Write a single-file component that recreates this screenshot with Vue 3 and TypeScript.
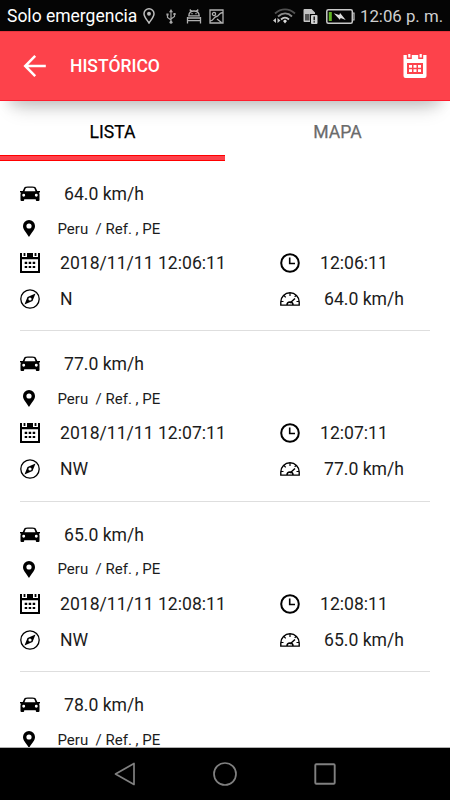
<script setup lang="ts">
interface Entry {
  speed: string
  place: string
  date: string
  time: string
  heading: string
}

const place = 'Peru  / Ref. , PE'
const entries: Entry[] = [
  { speed: '64.0 km/h', place, date: '2018/11/11 12:06:11', time: '12:06:11', heading: 'N' },
  { speed: '77.0 km/h', place, date: '2018/11/11 12:07:11', time: '12:07:11', heading: 'NW' },
  { speed: '65.0 km/h', place, date: '2018/11/11 12:08:11', time: '12:08:11', heading: 'NW' },
  { speed: '78.0 km/h', place, date: '2018/11/11 12:09:11', time: '12:09:11', heading: 'NW' },
]
</script>

<template>
  <div class="screen">
    <div class="status">
      <span class="carrier">Solo emergencia</span>
      <svg class="s-pin" width="12" height="16" viewBox="0 0 12 16" fill="none" stroke="#bdbdbd" stroke-width="1.5">
        <path d="M6 15C4 11.800 1 9 1 5.800a5 5 0 0 1 10 0C11 9 8 11.800 6 15z" /><circle cx="6" cy="5.700" r="1.200" fill="#bdbdbd" />
      </svg>
      <svg class="s-usb" width="10" height="15" viewBox="0 0 10 15" fill="none" stroke="#a8a8a8" stroke-width="1.200">
        <path d="M5 2v11M1.500 6v2.500L5 11M8.500 5v2.500L5 10" /><path d="M5 0 3 3.200h4zM.4 4.500h2.200v2H.4zM7.400 4h2.200v2H7.400z" fill="#a8a8a8" stroke="none" /><circle cx="5" cy="13.300" r="1.500" fill="#a8a8a8" stroke="none" />
      </svg>
      <svg class="s-bot" width="16" height="15" viewBox="0 0 16 15" fill="none" stroke="#b0b0b0" stroke-width="1.300">
        <path d="m3.800.5 1.500 2M12.200.5l-1.500 2M2.800 6.800C3 3.700 5 2 8 2s5 1.700 5.200 4.800zM1.500 8v6.500M14.500 8v6.500M1 9h14M1 11.600h14" /><path d="M5.400 4.600h1.200M9.400 4.600h1.200" />
      </svg>
      <svg class="s-img" width="15" height="15" viewBox="0 0 15 15" fill="none" stroke="#b0b0b0" stroke-width="1.300">
        <path d="M1 1h13v13H1zM1.500 12C5 11 4.500 8 7.500 7.500S9 4.500 13.500 3.500M8 10l4.500 3.500" /><circle cx="5" cy="5" r="1.600" />
      </svg>
      <svg class="s-wifi" width="23" height="16" viewBox="0 0 23 16" fill="none">
        <path d="M2 5.500c6-5.500 14-5.500 20 0" stroke="#505050" stroke-width="1.800" /><path d="M5 8.500c4.500-4 10-4 14 0" stroke="#8a8a8a" stroke-width="1.800" /><path d="M8 11.500c2.500-2.400 5.500-2.400 8 0" stroke="#c8c8c8" stroke-width="1.800" /><path d="m10 13 2-1.500 2 1.500-2 2.500z" fill="#ddd" /><path d="m0 12.500 3-2.500v5zM7.500 12.500l-3-2.500v5z" fill="#c8c8c8" />
      </svg>
      <svg class="s-sim" width="15" height="16" viewBox="0 0 15 16">
        <path d="M1.500 1h7L12 4.500V6H7v8H1.500Q.5 14 .5 13V2q0-1 1-1z" fill="#c4c4c4" /><path d="M2 6h4.500v6.500H2z" fill="#555" /><rect x="8" y="7" width="6.500" height="9" rx="1" fill="#d0d0d0" /><path d="M11.200 8.500v3.800M11.200 13.200v1.300" stroke="#111" stroke-width="1.400" />
      </svg>
      <svg class="s-bat" width="29" height="15" viewBox="0 0 29 15">
        <rect x=".8" y=".8" width="25.500" height="13.400" rx="1.500" fill="none" stroke="#c9c9c9" stroke-width="1.500" /><path d="M27 4h1v7h-1" fill="none" stroke="#c9c9c9" stroke-width="1.200" /><path d="M2.800 3h3v9h-3z" fill="#61b522" /><path d="m7.800 4.200 5.400 1.900.9-2 5.600 6.900-5-2-.9 1.800z" fill="#dedede" />
      </svg>
      <span class="clock">12:06 p. m.</span>
    </div>

    <header class="bar">
      <svg class="back" width="24" height="24" viewBox="0 0 24 24" fill="none" stroke="#fff" stroke-width="2.500">
        <path d="M22.800 12H2.500M12.200 1.800 2.200 12l10 10.200" />
      </svg>
      <h1>HISTÓRICO</h1>
      <svg class="bar-cal" width="24" height="24" viewBox="0 0 24 24">
        <path fill="#fff" fill-rule="evenodd" d="M.5 1H3.800v4h5V1h6.400v4h5V1h3.300v21q0 2-2 2h-19q-2 0-2-2zM4 9v11h16V9zM5.200 0h2.200v3.500H5.200zM16.600 0h2.200v3.500h-2.200zM6 11h3v2.700H6zM10.500 11h3v2.700h-3zM15 11h3v2.700h-3zM6 15.300h3V18H6zM10.500 15.300h3V18h-3zM15 15.300h3V18h-3z" />
      </svg>
    </header>

    <nav class="tabs">
      <div class="tab active">LISTA</div>
      <div class="tab">MAPA</div>
    </nav>

    <main class="list">
      <section v-for="e in entries" :key="e.time" class="entry">
        <div class="row">
          <svg class="icon" width="20" height="16" viewBox="0 0 20 16">
            <path fill="#000" fill-rule="evenodd" d="M0 5h2.700l1.500-3.300C4.600.7 6.500.5 10 .5s5.400.2 5.800 1.200L17.300 5H20v1.500h-1.200q.7.800.7 2V14q0 1-1 1h-1.700q-1 0-1-1v-.8H4.200v.8q0 1-1 1H1.500q-1 0-1-1V8.500q0-1.200.7-2H0zM4.500 5.200h11l-1.200-2.900C14 1.900 12.500 1.800 10 1.800s-4 .1-4.300.5zM3.700 7.800a1.400 1.400 0 1 0 0 2.900 1.400 1.400 0 0 0 0-2.900zM16.300 7.800a1.400 1.400 0 1 0 0 2.900 1.400 1.400 0 0 0 0-2.900z" />
          </svg>
          <span class="value speed">{{ e.speed }}</span>
        </div>
        <div class="row place-row">
          <svg class="icon pin" width="12" height="17" viewBox="0 0 12 17">
            <path fill="#000" fill-rule="evenodd" d="M6 0a6 6 0 0 1 6 6c0 3.800-3.500 6.500-6 11C3.500 12.500 0 9.800 0 6a6 6 0 0 1 6-6zm0 3.400a2.600 2.600 0 1 0 0 5.200 2.600 2.600 0 0 0 0-5.200z" />
          </svg>
          <span class="place">{{ e.place }}</span>
        </div>
        <div class="row split">
          <div class="cell">
            <svg class="icon cal" width="20" height="20" viewBox="0 0 20 20">
              <path fill="#000" fill-rule="evenodd" d="M0 0h2v4h5V0h6v4h5V0h2v19.500q0 .5-.5.500H.5Q0 20 0 19.500zM2 6.300V18h16V6.300zM3.600 0h1.800v3H3.600zM14.600 0h1.800v3h-1.800zM4.700 8.800h2.500V11H4.700zM8.700 8.800h2.500V11H8.700zM12.700 8.800h2.500V11h-2.500zM4.700 12.900h2.500v2.200H4.700zM8.700 12.900h2.500v2.200H8.700zM12.700 12.900h2.500v2.200h-2.500z" />
            </svg>
            <span class="value date">{{ e.date }}</span>
          </div>
          <div class="cell">
            <svg class="icon" width="20" height="20" viewBox="0 0 20 20" fill="none" stroke="#000" stroke-width="2">
              <circle cx="10" cy="10" r="8.800" /><path d="M9.700 4.500v6H15" stroke-width="1.600" />
            </svg>
            <span class="value date">{{ e.time }}</span>
          </div>
        </div>
        <div class="row split">
          <div class="cell">
            <svg class="icon" width="20" height="20" viewBox="0 0 20 20">
              <circle cx="10" cy="10" r="9.200" fill="none" stroke="#000" stroke-width="1.300" />
              <path fill="#000" fill-rule="evenodd" d="M15.500 4.500 12.500 12l-8 3.500L7.500 8zM10 8.400a1.600 1.600 0 1 0 0 3.200 1.600 1.600 0 0 0 0-3.200z" />
            </svg>
            <span class="value date">{{ e.heading }}</span>
          </div>
          <div class="cell">
            <svg class="icon gauge" width="20" height="14" viewBox="0 0 20 14" fill="none" stroke="#000" stroke-width="1.400">
              <path d="M.8 13.100V10A9.200 9.200 0 0 1 19.200 10v3.100z" /><path d="M10 1v3M4 3.500l1.700 1.800M16 3.500l-1.300 1.400M1 9.500h2.500M19 9.500h-2.500" stroke-width="1.200" /><path d="M7 13a3 3 0 0 1 6 0M10 11l5-4.500" stroke-width="1.500" />
            </svg>
            <span class="value speed">{{ e.speed }}</span>
          </div>
        </div>
      </section>
    </main>

    <footer class="nav">
      <svg width="24" height="24" viewBox="0 0 24 24" fill="none" stroke="#808080" stroke-width="1.700" stroke-linejoin="round">
        <path d="M2.500 12 21 1.500v21z" />
      </svg>
      <svg width="24" height="24" viewBox="0 0 24 24" fill="none" stroke="#808080" stroke-width="1.700">
        <circle cx="12" cy="12" r="11" />
      </svg>
      <svg width="24" height="24" viewBox="0 0 24 24" fill="none" stroke="#808080" stroke-width="1.900">
        <rect x="2.300" y="2.300" width="19.400" height="19.400" rx="1" />
      </svg>
    </footer>
  </div>
</template>

<style>
body {
  margin: 0;
  overflow: hidden;
}
</style>

<style scoped>
.screen {
  display: flex;
  flex-direction: column;
  width: 450px;
  height: 800px;
  overflow: hidden;
  background: #fff;
  font-family: Roboto, sans-serif;
  color: #1c1c1c;
}
svg {
  display: block;
  flex: none;
}
.status {
  display: flex;
  align-items: center;
  flex: none;
  box-sizing: border-box;
  height: 31px;
  padding: 1px 0 0 7px;
  background: #050505;
  color: #fff;
  white-space: nowrap;
}
.carrier {
  width: 136px;
  font-size: 17.500px;
}
.s-usb { margin-left: 11px; }
.s-bot { margin-left: 10px; }
.s-img { margin-left: 7px; }
.s-wifi { margin-left: 49px; }
.s-sim { margin-left: 7px; }
.s-bat { margin-left: 8px; }
.clock {
  margin-left: 5px;
  font-size: 16.800px;
  color: #d0d0d0;
}
.bar {
  position: relative;
  display: flex;
  align-items: center;
  flex: none;
  box-sizing: border-box;
  height: 70px;
  padding: 0 23px;
  background: #fd424b;
  border-top: 1px solid #e9353e;
  border-bottom: 1px solid #ff1d2e;
  box-shadow:
    0 12px 12px -8px rgba(0, 0, 0, .12),
    0 20px 20px -14px rgba(0, 0, 0, .18);
  color: #fff;
}
h1 {
  flex: 1;
  margin: 0 0 0 23px;
  font-size: 17.500px;
  font-weight: 500;
  line-height: 24px;
}
.tabs {
  display: flex;
  flex: none;
  height: 60px;
}
.tab {
  display: flex;
  flex: 1;
  align-items: center;
  justify-content: center;
  box-sizing: border-box;
  padding-top: 2px;
  font-size: 17.600px;
  -webkit-text-stroke: .25px currentColor;
  color: #6b6b6b;
}
.tab.active {
  color: #000;
  background:
    linear-gradient(#f00 1px, #fd424b 1px, #fd424b 5px, #f00 5px) bottom / 100% 6px no-repeat;
}
.list {
  flex: 1;
  min-height: 0;
  overflow: hidden;
}
.entry {
  box-sizing: border-box;
  height: 170.400px;
  margin: 0 20px;
  padding-top: 15px;
  border-bottom: 1px solid #dedede;
}
.row,
.cell {
  display: flex;
  align-items: center;
  height: 36px;
  white-space: pre;
}
.place-row {
  height: 33px;
}
.split {
  display: grid;
  grid-template-columns: 260px 150px;
}
.pin {
  margin-left: 3px;
}
.value {
  font-size: 17.600px;
}
.speed { margin-left: 24px; }
.date { margin-left: 20px; }
.place {
  margin-left: 22.500px;
  font-size: 15px;
}
.nav {
  display: flex;
  flex: none;
  justify-content: center;
  align-items: center;
  gap: 76px;
  box-sizing: border-box;
  height: 53px;
  border-top: 1px solid #b0b0b0;
  background: #000;
}
</style>
